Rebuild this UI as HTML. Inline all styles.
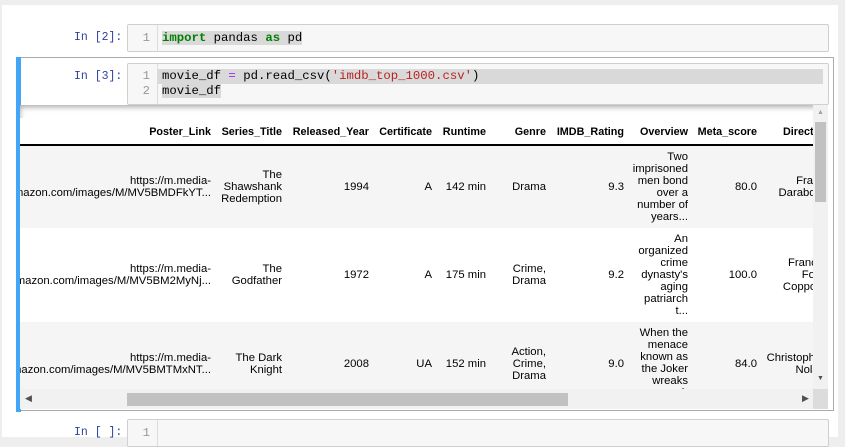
<!DOCTYPE html>
<html><head><meta charset="utf-8"><style>
body{margin:0;width:845px;height:437px;background:#eee;overflow:hidden;position:relative;font-family:"Liberation Sans",Arial,sans-serif}
.nb{position:absolute;left:2px;top:5px;width:836px;height:432px;background:#fff}
.mono{font-family:"Liberation Mono","DejaVu Sans Mono",monospace;font-size:12.3px}
.prompt{position:absolute;color:#303F9F;font-family:"Liberation Mono",monospace;font-size:11.5px}
.code{position:absolute;left:127px;width:700px;background:#f7f7f7;border:1px solid #cfcfcf;border-radius:2px}
.gut{position:absolute;left:0;top:0;bottom:0;width:29px;border-right:1px solid #ddd;background:#f7f7f7}
.ln{position:absolute;left:0;width:22px;text-align:right;color:#999}
.tx{position:absolute;left:34px;color:#000;white-space:pre}
.hl{background:#d9d9d9}
.kw{color:#008000;font-weight:bold}
.st{color:#BA2121}
.op{color:#AA22FF}
.out{position:absolute;left:20px;top:105px;width:808px;height:304px;overflow:hidden;background:#fff;box-shadow:inset 0 2px 6px rgba(0,0,0,.35)}
.c{position:absolute;font-size:11.3px;line-height:12px;text-align:right;color:#000;white-space:nowrap;display:flex;align-items:center;justify-content:flex-end}
.h{font-weight:bold;font-size:10.8px}
</style></head><body>
<div class="nb"></div>
<div class="prompt" style="left:74px;top:31px">In [2]:</div>
<div class="code mono" style="top:24px;height:26px"><div class="gut"></div><div class="ln" style="top:6px">1</div><div class="tx" style="top:6px"><span class="hl"><span class="kw">import</span> pandas <span class="kw">as</span> pd</span></div></div>

<div style="position:absolute;left:16px;top:57px;width:818px;height:354px;border:1px solid #ababab;box-sizing:border-box"></div>
<div style="position:absolute;left:16px;top:57px;width:5px;height:355px;background:#42A5F5"></div>
<div class="prompt" style="left:74px;top:70px">In [3]:</div>
<div class="code mono" style="top:63px;height:40px"><div class="gut"></div>
<div style="position:absolute;left:30px;top:5px;width:665px;height:15px;background:#d9d9d9"></div>
<div class="ln" style="top:5px">1</div><div class="ln" style="top:20px">2</div>
<div class="tx" style="top:5px">movie_df <span class="op">=</span> pd.read_csv(<span class="st">'imdb_top_1000.csv'</span>)</div>
<div class="tx" style="top:20px"><span class="hl">movie_df</span></div></div>

<div class="out">
<div style="position:absolute;left:0;top:13px;width:793px;height:26px;border-bottom:2px solid #000;background:#fff"></div>
<div style="position:absolute;left:0;top:41px;width:793px;height:82px;background:#f5f5f5"></div>
<div style="position:absolute;left:0;top:123px;width:793px;height:94px;background:#fff"></div>
<div style="position:absolute;left:0;top:217px;width:793px;height:90px;background:#f5f5f5"></div>
<!-- header -->
<div class="c h" style="left:0;width:191px;top:21px;height:12px">Poster_Link</div>
<div class="c h" style="left:191px;width:71px;top:21px;height:12px">Series_Title</div>
<div class="c h" style="left:262px;width:87px;top:21px;height:12px">Released_Year</div>
<div class="c h" style="left:349px;width:63px;top:21px;height:12px">Certificate</div>
<div class="c h" style="left:412px;width:54px;top:21px;height:12px">Runtime</div>
<div class="c h" style="left:466px;width:60px;top:21px;height:12px">Genre</div>
<div class="c h" style="left:526px;width:78px;top:21px;height:12px">IMDB_Rating</div>
<div class="c h" style="left:604px;width:64px;top:21px;height:12px">Overview</div>
<div class="c h" style="left:668px;width:69px;top:21px;height:12px">Meta_score</div>
<div class="c h" style="left:737px;width:87px;top:21px;height:12px;justify-content:flex-start;padding-left:26px">Director</div>
<!-- rows -->
<div class="c" style="left:-100px;width:291px;top:41px;height:82px">https://m.media-<br>amazon.com/images/M/MV5BMDFkYT...</div>
<div class="c" style="left:191px;width:71px;top:41px;height:82px">The<br>Shawshank<br>Redemption</div>
<div class="c" style="left:262px;width:87px;top:41px;height:82px">1994</div>
<div class="c" style="left:349px;width:63px;top:41px;height:82px">A</div>
<div class="c" style="left:412px;width:54px;top:41px;height:82px">142 min</div>
<div class="c" style="left:466px;width:60px;top:41px;height:82px">Drama</div>
<div class="c" style="left:526px;width:78px;top:41px;height:82px">9.3</div>
<div class="c" style="left:604px;width:64px;top:41px;height:82px">Two<br>imprisoned<br>men bond<br>over a<br>number of<br>years...</div>
<div class="c" style="left:668px;width:69px;top:41px;height:82px">80.0</div>
<div class="c" style="left:737px;width:68px;top:41px;height:82px">Frank<br>Darabont</div>

<div class="c" style="left:-100px;width:291px;top:123px;height:94px">https://m.media-<br>amazon.com/images/M/MV5BM2MyNj...</div>
<div class="c" style="left:191px;width:71px;top:123px;height:94px">The<br>Godfather</div>
<div class="c" style="left:262px;width:87px;top:123px;height:94px">1972</div>
<div class="c" style="left:349px;width:63px;top:123px;height:94px">A</div>
<div class="c" style="left:412px;width:54px;top:123px;height:94px">175 min</div>
<div class="c" style="left:466px;width:60px;top:123px;height:94px">Crime,<br>Drama</div>
<div class="c" style="left:526px;width:78px;top:123px;height:94px">9.2</div>
<div class="c" style="left:604px;width:64px;top:123px;height:94px">An<br>organized<br>crime<br>dynasty's<br>aging<br>patriarch<br>t...</div>
<div class="c" style="left:668px;width:69px;top:123px;height:94px">100.0</div>
<div class="c" style="left:737px;width:68px;top:123px;height:94px">Francis<br>Ford<br>Coppola</div>

<div class="c" style="left:-100px;width:291px;top:217px;height:84px">https://m.media-<br>amazon.com/images/M/MV5BMTMxNT...</div>
<div class="c" style="left:191px;width:71px;top:217px;height:84px">The Dark<br>Knight</div>
<div class="c" style="left:262px;width:87px;top:217px;height:84px">2008</div>
<div class="c" style="left:349px;width:63px;top:217px;height:84px">UA</div>
<div class="c" style="left:412px;width:54px;top:217px;height:84px">152 min</div>
<div class="c" style="left:466px;width:60px;top:217px;height:84px">Action,<br>Crime,<br>Drama</div>
<div class="c" style="left:526px;width:78px;top:217px;height:84px">9.0</div>
<div class="c" style="left:604px;width:64px;top:222px;height:84px;align-items:flex-start">When the<br>menace<br>known as<br>the Joker<br>wreaks<br>h</div>
<div class="c" style="left:668px;width:69px;top:217px;height:84px">84.0</div>
<div class="c" style="left:737px;width:68px;top:217px;height:84px">Christopher<br>Nolan</div>
<!-- scrollbars -->
<div style="position:absolute;left:793px;top:0;width:15px;height:284px;background:#f1f1f1"></div>
<div style="position:absolute;left:795px;top:17px;width:11px;height:80px;background:#c1c1c1"></div>
<div style="position:absolute;left:797px;top:4px;font-size:7px;color:#a3a3a3">▲</div>
<div style="position:absolute;left:797px;top:270px;font-size:7px;color:#505050">▼</div>
<div style="position:absolute;left:0;top:284px;width:793px;height:20px;background:#f1f1f1"></div>
<div style="position:absolute;left:107px;top:288px;width:441px;height:13px;background:#c1c1c1"></div>
<div style="position:absolute;left:5px;top:288px;font-size:9px;color:#505050">◀</div>
<div style="position:absolute;left:782px;top:288px;font-size:9px;color:#505050">▶</div>
<div style="position:absolute;left:793px;top:284px;width:15px;height:20px;background:#dcdcdc"></div>
</div>

<div class="prompt" style="left:74px;top:426px">In [ ]:</div>
<div class="code mono" style="top:419px;height:26px"><div class="gut"></div><div class="ln" style="top:6px">1</div></div>
</body></html>
